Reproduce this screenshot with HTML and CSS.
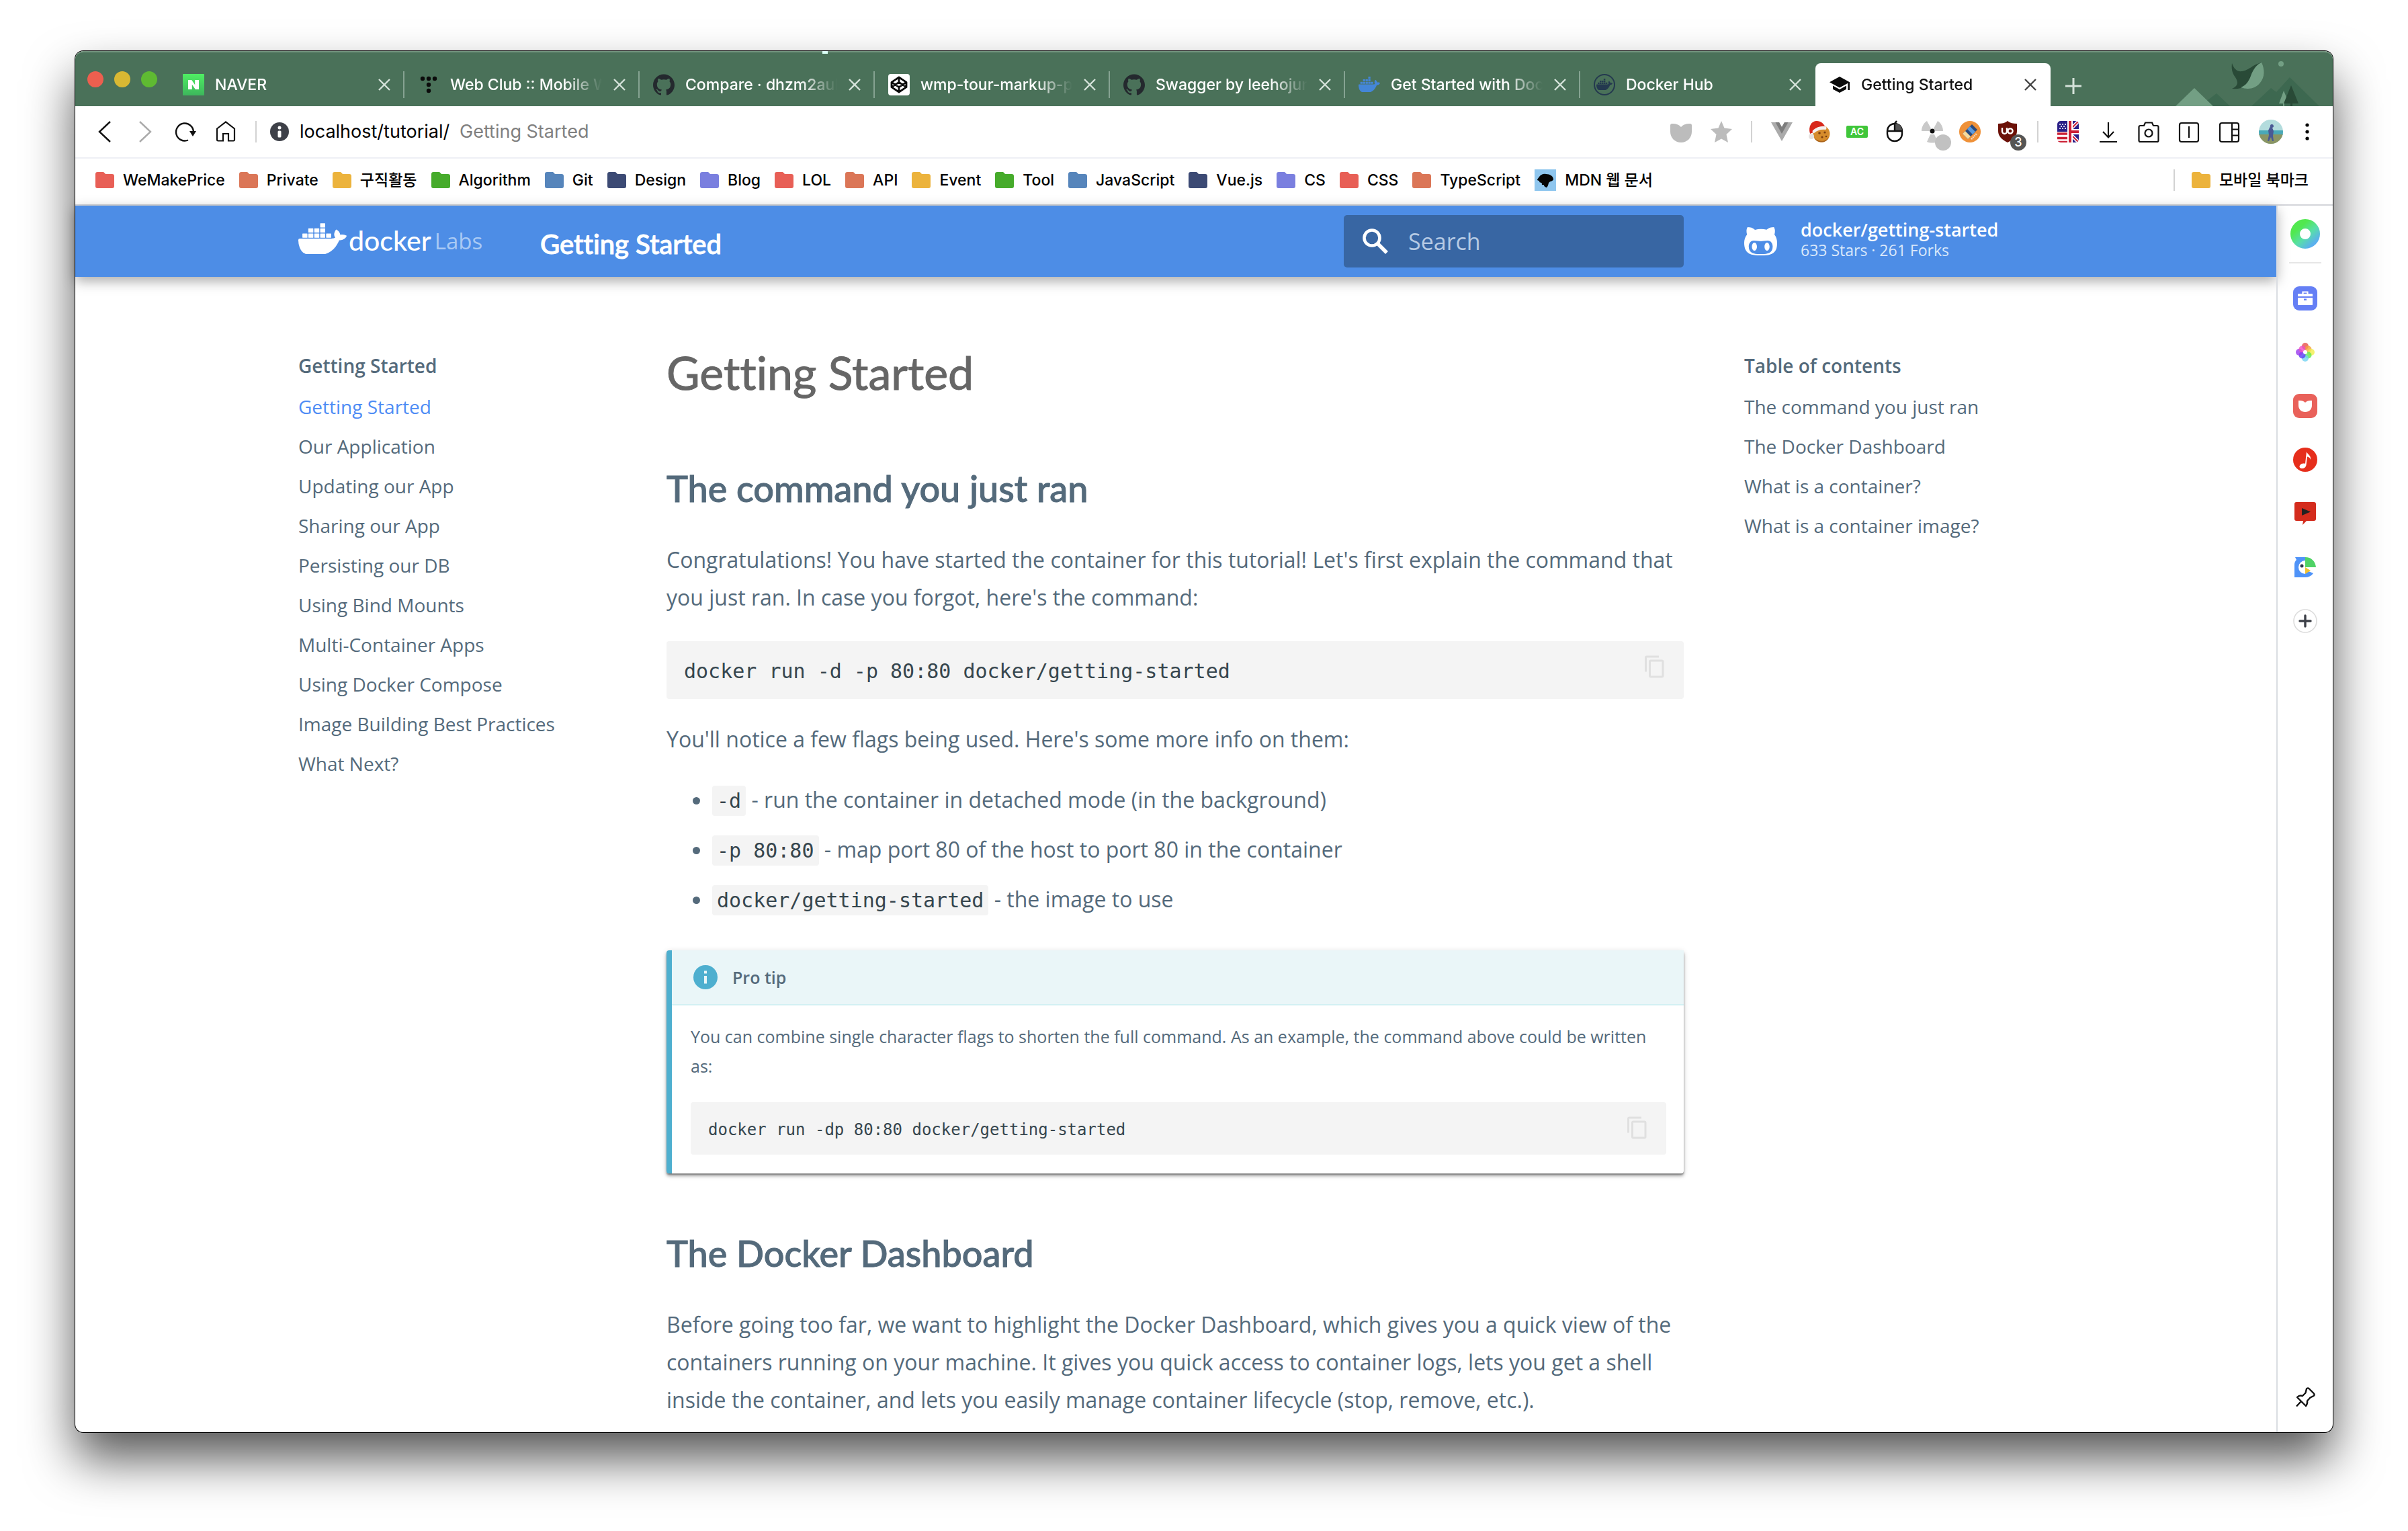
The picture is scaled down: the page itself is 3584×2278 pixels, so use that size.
FILE: index.html
```html
<!DOCTYPE html>
<html lang="ko">
<head>
<meta charset="utf-8">
<meta name="viewport" content="width=device-width, initial-scale=1">
<title>Getting Started</title>
<link rel="stylesheet" href="styles.css">
</head>
<body>

<svg class="sprite" aria-hidden="true">
  <symbol id="close" viewBox="0 0 20 20"><path d="M2 2l16 16M18 2L2 18" fill="none" stroke="currentColor" stroke-width="2.4"/></symbol>
  <symbol id="folder" viewBox="0 0 28 24"><path d="M0 3a3 3 0 0 1 3-3h8c1.500 0 2 .6 2.800 1.600L15 3h10a3 3 0 0 1 3 3v15a3 3 0 0 1-3 3H3a3 3 0 0 1-3-3z" fill="currentColor"/></symbol>
  <symbol id="whale" viewBox="0 3.300 24 16.500" preserveAspectRatio="none"><path fill="currentColor" d="M13.983 11.078h2.119a.186.186 0 00.186-.185V9.006a.186.186 0 00-.186-.186h-2.119a.185.185 0 00-.185.185v1.888c0 .102.083.185.185.185m-2.954-5.430h2.118a.186.186 0 00.186-.186V3.574a.186.186 0 00-.186-.185h-2.118a.185.185 0 00-.185.185v1.888c0 .102.082.185.185.185m0 2.716h2.118a.187.187 0 00.186-.186V6.290a.186.186 0 00-.186-.185h-2.118a.185.185 0 00-.185.185v1.887c0 .102.082.185.185.186m-2.930 0h2.120a.186.186 0 00.184-.186V6.290a.185.185 0 00-.185-.185H8.100a.185.185 0 00-.185.185v1.887c0 .102.083.185.185.186m-2.964 0h2.119a.186.186 0 00.185-.186V6.290a.185.185 0 00-.185-.185H5.136a.186.186 0 00-.186.185v1.887c0 .102.084.185.186.186m5.893 2.715h2.118a.186.186 0 00.186-.185V9.006a.186.186 0 00-.186-.186h-2.118a.185.185 0 00-.185.185v1.888c0 .102.082.185.185.185m-2.930 0h2.120a.185.185 0 00.184-.185V9.006a.185.185 0 00-.184-.186h-2.120a.185.185 0 00-.184.185v1.888c0 .102.083.185.185.185m-2.964 0h2.119a.185.185 0 00.185-.185V9.006a.185.185 0 00-.184-.186h-2.120a.186.186 0 00-.186.186v1.887c0 .102.084.185.186.185m-2.920 0h2.120a.185.185 0 00.184-.185V9.006a.185.185 0 00-.184-.186h-2.120a.185.185 0 00-.184.185v1.888c0 .102.082.185.185.185M23.763 9.890c-.065-.051-.672-.51-1.954-.51-.338.001-.676.03-1.010.087-.248-1.700-1.653-2.530-1.716-2.566l-.344-.199-.226.327c-.284.438-.49.922-.612 1.430-.23.970-.09 1.882.403 2.661-.595.332-1.550.413-1.744.42H.751a.751.751 0 00-.75.748 11.376 11.376 0 00.692 4.062c.545 1.428 1.355 2.480 2.410 3.124 1.180.723 3.100 1.137 5.275 1.137.983.003 1.963-.086 2.930-.266a12.248 12.248 0 003.823-1.389c.98-.567 1.860-1.288 2.610-2.136 1.252-1.418 1.998-2.997 2.553-4.400h.221c1.372 0 2.215-.549 2.680-1.009.309-.293.55-.65.707-1.046l.098-.288z"/></symbol>
  <symbol id="github" viewBox="0 0 24 24"><path fill="#24292e" d="M12 .297c-6.630 0-12 5.373-12 12 0 5.303 3.438 9.800 8.205 11.385.6.113.82-.258.82-.577 0-.285-.01-1.040-.015-2.040-3.338.724-4.042-1.610-4.042-1.610C4.422 18.070 3.633 17.700 3.633 17.700c-1.087-.744.084-.729.084-.729 1.205.084 1.838 1.236 1.838 1.236 1.070 1.835 2.809 1.305 3.495.998.108-.776.417-1.305.76-1.605-2.665-.3-5.466-1.332-5.466-5.930 0-1.310.465-2.380 1.235-3.220-.135-.303-.54-1.523.105-3.176 0 0 1.005-.322 3.300 1.230.96-.267 1.980-.399 3-.405 1.020.006 2.040.138 3 .405 2.280-1.552 3.285-1.230 3.285-1.230.645 1.653.24 2.873.12 3.176.765.84 1.230 1.910 1.230 3.220 0 4.610-2.805 5.625-5.475 5.920.42.36.81 1.096.81 2.220 0 1.606-.015 2.896-.015 3.286 0 .315.21.69.825.57C20.565 22.092 24 17.592 24 12.297c0-6.627-5.373-12-12-12"/></symbol>
  <symbol id="copy" viewBox="0 0 24 24"><path fill="currentColor" d="M19 21H8V7h11m0-2H8a2 2 0 00-2 2v14a2 2 0 002 2h11a2 2 0 002-2V7a2 2 0 00-2-2m-3-4H4a2 2 0 00-2 2v14h2V3h12V1z"/></symbol>
  <symbol id="shield" viewBox="0 0 32 32"><path fill="currentColor" d="M0 6.500C0 4.500 1.500 4 3.500 4 9 4 13 5.500 16 9c3-3.500 7-5 12.500-5C30.500 4 32 4.500 32 6.500V16c0 9-7 16-16 16S0 25 0 16z"/></symbol>
</svg>

<div class="window">
  <div class="tabstrip">
    <div class="lights">
      <button class="light light-close" aria-label="Close window"></button>
      <button class="light light-min" aria-label="Minimize"></button>
      <button class="light light-max" aria-label="Zoom"></button>
    </div>
    <div class="tabs">
      <div class="tab">
        <svg class="favicon" viewBox="0 0 32 32"><defs><linearGradient id="nv" x2="0" y2="1"><stop stop-color="#4fee63"/><stop offset="1" stop-color="#3db65c"/></linearGradient></defs><rect width="32" height="32" rx="1" fill="url(#nv)"/><path d="M8 9h5.200l5 7.200V9H24v14h-5.200l-5-7.200V23H8z" fill="#fff"/></svg>
        <a class="tab-title" href="#">NAVER</a>
        <button class="tab-close" aria-label="Close tab"><svg><use href="#close"/></svg></button>
      </div>
      <div class="tab">
        <svg class="favicon" viewBox="0 0 32 32"><g fill="#0b0b0b"><circle cx="7" cy="7" r="3.200"/><circle cx="16" cy="7" r="3.200"/><circle cx="25" cy="7" r="3.200"/><circle cx="16" cy="16" r="3.200"/><circle cx="16" cy="25" r="3.200"/></g></svg>
        <a class="tab-title" href="#">Web Club :: Mobile Web</a>
        <button class="tab-close" aria-label="Close tab"><svg><use href="#close"/></svg></button>
      </div>
      <div class="tab">
        <svg class="favicon"><use href="#github"/></svg>
        <a class="tab-title" href="#">Compare · dhzm2aul/</a>
        <button class="tab-close" aria-label="Close tab"><svg><use href="#close"/></svg></button>
      </div>
      <div class="tab">
        <svg class="favicon" viewBox="0 0 32 32"><rect width="32" height="32" rx="4" fill="#fff"/><path d="M16 5l11 7.300v7.400L16 27 5 19.700v-7.400zM16 5v7.300M16 27v-7.300M5 12.300l11 7.400 11-7.400M5 19.700l11-7.400 11 7.400" fill="none" stroke="#0a0a0a" stroke-width="2.800" stroke-linejoin="round"/></svg>
        <a class="tab-title" href="#">wmp-tour-markup-poc</a>
        <button class="tab-close" aria-label="Close tab"><svg><use href="#close"/></svg></button>
      </div>
      <div class="tab">
        <svg class="favicon"><use href="#github"/></svg>
        <a class="tab-title" href="#">Swagger by leehojung</a>
        <button class="tab-close" aria-label="Close tab"><svg><use href="#close"/></svg></button>
      </div>
      <div class="tab">
        <svg class="favicon docker-blue" viewBox="0 0 32 32"><use href="#whale" y="4" width="32" height="23"/></svg>
        <a class="tab-title" href="#">Get Started with Docker</a>
        <button class="tab-close" aria-label="Close tab"><svg><use href="#close"/></svg></button>
      </div>
      <div class="tab tab-last">
        <svg class="favicon docker-navy" viewBox="0 0 32 32"><circle cx="16" cy="16" r="15" fill="none" stroke="currentColor" stroke-width="2"/><use href="#whale" x="4" y="7" width="24" height="17"/></svg>
        <a class="tab-title" href="#">Docker Hub</a>
        <button class="tab-close" aria-label="Close tab"><svg><use href="#close"/></svg></button>
      </div>
      <div class="tab tab-active">
        <svg class="favicon" viewBox="0 0 32 32"><path d="M16 4l15 8.200V24h-2.700V13.700L16 20.400 1 12.200zM6 17.500l10 5.500 10-5.500v5.200L16 28 6 22.700z" fill="#0a0a0a"/></svg>
        <a class="tab-title" href="#">Getting Started</a>
        <button class="tab-close" aria-label="Close tab"><svg><use href="#close"/></svg></button>
      </div>
    </div>
    <button class="new-tab" aria-label="New tab"><svg viewBox="0 0 24 24"><path d="M12 0v24M0 12h24" stroke="#d5e2da" stroke-width="3"/></svg></button>
    <svg class="scenery" viewBox="0 0 234 80" aria-hidden="true">
      <path d="M36 80l25-19 20 19z" fill="#3d6850"/>
      <path d="M0 80l28-27 28 27z" fill="#739f84"/>
      <path d="M113 80l29-27 8 6 20-22 44 43z" fill="#3d6850"/>
      <path d="M154 76l7-19 8 19zM160 76h2v4h-2z" fill="#739f84"/>
      <path d="M161 76l11-27 11 27zM171 76h3v4h-3z" fill="#294a37"/>
      <path d="M84 16c3 9 8 13 15 12 10-1 14-9 29-13-8 8-10 16-14 25-5 10-15 15-30 14 9-4 10-9 5-17-5-7-6-13-5-21z" fill="#294a37"/>
      <path d="M128 15c5 10 5 22-2 30-7 9-18 11-29 7 8-3 12-9 15-17 4-11 9-17 16-20z" fill="#739f84"/>
      <circle cx="157" cy="17" r="4" fill="#739f84"/>
    </svg>
  </div>

  <div class="toolbar">
    <div class="tools">
      <button class="tool" aria-label="Back"><svg viewBox="0 0 32 32"><path d="M24 1L8 16l16 15" fill="none" stroke="#111" stroke-width="2.400"/></svg></button>
      <button class="tool" aria-label="Forward" disabled><svg viewBox="0 0 32 32"><path d="M8 1l16 15L8 31" fill="none" stroke="#aaa" stroke-width="2.400"/></svg></button>
      <button class="tool" aria-label="Reload"><svg viewBox="0 0 32 32"><path d="M20 28.500A13 13 0 1 1 28 17" fill="none" stroke="#111" stroke-width="2.400"/><path d="M22 15h10l-5 8z" fill="#111"/></svg></button>
      <button class="tool" aria-label="Home"><svg viewBox="0 0 32 32"><path d="M3 11.500L16 1.500l13 10V28a1.500 1.500 0 0 1-1.500 1.500H20V19h-8v10.500H4.500A1.500 1.500 0 0 1 3 28z" fill="none" stroke="#111" stroke-width="2.200"/></svg></button>
    </div>
    <span class="rule"></span>
    <div class="address">
      <svg class="info" viewBox="0 0 28 28"><circle cx="14" cy="14" r="14" fill="#3d4048"/><circle cx="14" cy="8" r="2.500" fill="#fff"/><rect x="11.500" y="12.500" width="5" height="10" rx="1.500" fill="#fff"/></svg>
      <input class="url" type="text" aria-label="Address" value="localhost/tutorial/">
      <span class="url-title">Getting Started</span>
    </div>
    <div class="tools">
      <button class="tool muted" aria-label="Tracking protection"><svg><use href="#shield"/></svg></button>
      <button class="tool muted" aria-label="Bookmark"><svg viewBox="0 0 32 32"><path d="M16 0l4.500 10.500L32 12l-8.500 8L26 32l-10-5.500L6 32l2.500-12L0 12l11.500-1.500z" fill="currentColor"/></svg></button>
    </div>
    <span class="rule"></span>
    <div class="tools extensions">
      <button class="tool" aria-label="Vue devtools"><svg viewBox="0 0 32 32"><path d="M0 2h12l4 7 4-7h12L16 30z" fill="#ababab"/><path d="M6.500 2H12l4 7 4-7h5.500L16 19z" fill="#7d7d7d"/></svg></button>
      <button class="tool" aria-label="Cookies"><svg viewBox="0 0 32 32"><circle cx="19" cy="19" r="12.500" fill="#d68c2c"/><path d="M8 25c6 6 17 7 22-1-2 6-7 8-12 7.500-5-.5-8-3-10-6.500z" fill="#a9621a"/><g fill="#7b3f10"><circle cx="16" cy="18" r="1.800"/><circle cx="24" cy="17" r="1.600"/><circle cx="20" cy="24" r="1.600"/><circle cx="26" cy="23" r="1.300"/></g><path d="M2 19C-1 8 4 0 12 0c6 0 11 4 13 10L7 17z" fill="#d8281b"/><path d="M6 14c6-5 12-7 19-6 2 1 2 4 0 5-7-1-12 1-17 5-2 0-3-2-2-4z" fill="#f5f1ee"/><circle cx="4" cy="23" r="4" fill="#e6e2df"/></svg></button>
      <button class="tool" aria-label="AC"><svg viewBox="0 0 32 32"><rect y="7" width="32" height="18" rx="2" fill="#3fc63a"/><text x="16" y="21" text-anchor="middle" class="ac-text">AC</text></svg></button>
      <button class="tool" aria-label="Mouse gestures"><svg viewBox="0 0 32 32"><rect x="5" y="4" width="22" height="26" rx="11" fill="#fff" stroke="#111" stroke-width="2.400"/><path d="M17 4c6 0 10 4 10 11H17z" fill="#555"/><path d="M5 15h22M16 15V4l3-4" fill="none" stroke="#111" stroke-width="2.400"/></svg></button>
      <button class="tool" aria-label="Blocker"><svg viewBox="0 0 32 32"><path d="M0 15C0 9 3 3 8 0l6 11-2 4zM32 15c0-6-3-12-8-15l-6 11 2 4zM8 31l5-11h6l5 11c-5 2-11 2-16 0z" fill="#c9c9c9"/><circle cx="16" cy="15" r="3.500" fill="#111"/><circle cx="32" cy="32" r="12" fill="#c1c1c1"/></svg></button>
      <button class="tool" aria-label="Eraser"><svg viewBox="0 0 32 32"><circle cx="16" cy="16" r="16" fill="#ef9138"/><path d="M5 19L19 5l8 8-14 14z" fill="#2b4a7c"/><path d="M12 12l4-4 8 8-4 4z" fill="#5a9ae0"/><path d="M5 19l4-4 8 8-4 4z" fill="#f7d99a"/><path d="M18 27l8-8" stroke="#f9d6b5" stroke-width="2.500" stroke-dasharray="2 1"/></svg></button>
      <button class="tool" aria-label="uBlock"><svg viewBox="0 0 32 32"><path d="M16 0c4 3 8 4 14 4v11c0 8-6 13-14 17C8 28 2 23 2 15V4c6 0 10-1 14-4z" fill="#6b1108"/><path d="M8 10v5.500a3.500 3.500 0 0 0 7 0V10" fill="none" stroke="#fff" stroke-width="2.400"/><circle cx="20" cy="15" r="3.600" fill="none" stroke="#fff" stroke-width="2.400"/></svg><span class="badge">3</span></button>
    </div>
    <span class="rule"></span>
    <div class="tools">
      <button class="tool" aria-label="Translate"><svg viewBox="0 0 32 32"><clipPath id="fl"><rect width="32" height="32" rx="5"/></clipPath><g clip-path="url(#fl)"><rect width="32" height="32" fill="#fff"/><path d="M0 19h16M0 25.500h16M0 31.500h16" stroke="#cc1f35" stroke-width="3.600"/><rect width="16" height="16" fill="#2a1f87"/><path d="M4 5h.1M8 5h.1M12 5h.1M6 8h.1M10 8h.1M4 11h.1M8 11h.1M12 11h.1" stroke="#fff" stroke-width="2" stroke-linecap="round"/><rect x="18" width="14" height="32" fill="#2a1f87"/><path d="M18 14L32 0M18 18l14 14" stroke="#fff" stroke-width="5"/><path d="M18 14L32 0M18 18l14 14" stroke="#cc1f35" stroke-width="2"/><path d="M18 16h14M19 0v32" stroke="#fff" stroke-width="8"/><path d="M18 16h14M19 0v32" stroke="#cc1f35" stroke-width="4"/></g></svg></button>
      <button class="tool" aria-label="Downloads"><svg viewBox="0 0 32 32"><path d="M16 2v22M8 16l8 8.500 8-8.500M3 31h26" fill="none" stroke="#111" stroke-width="2.200"/></svg></button>
      <button class="tool" aria-label="Capture"><svg viewBox="0 0 32 32"><path d="M1.500 9a2 2 0 0 1 2-2H9l2-4.500h10L23 7h5.500a2 2 0 0 1 2 2v20a2 2 0 0 1-2 2h-25a2 2 0 0 1-2-2z" fill="none" stroke="#111" stroke-width="2.200"/><circle cx="16" cy="18" r="5.500" fill="none" stroke="#111" stroke-width="2.200"/></svg></button>
      <button class="tool" aria-label="Split view"><svg viewBox="0 0 32 32"><rect x="2" y="3" width="28" height="28" rx="3" fill="none" stroke="#111" stroke-width="2.200"/><path d="M16 8v17" stroke="#111" stroke-width="2.200"/></svg></button>
      <button class="tool" aria-label="Side panel"><svg viewBox="0 0 32 32"><rect x="2" y="3" width="28" height="28" rx="3" fill="none" stroke="#111" stroke-width="2.200"/><path d="M20 3v28M20 12.500h10M20 21.500h10" stroke="#111" stroke-width="2.200"/></svg></button>
      <button class="tool avatar" aria-label="Profile"><svg viewBox="0 0 36 36"><clipPath id="av"><circle cx="18" cy="18" r="18"/></clipPath><g clip-path="url(#av)"><rect width="36" height="36" fill="#b3dcdd"/><rect y="16" width="36" height="7" fill="#4aa9b8"/><rect y="22" width="36" height="14" fill="#8a9564"/><path d="M17 10a2.500 2.500 0 1 1 3 2l2 5-1 7 1 8h-2l-2-6-3 6h-2l2-9-1-7z" fill="#4a5a94"/></g></svg></button>
      <button class="tool menu" aria-label="Menu"><svg viewBox="0 0 16 32"><circle cx="8" cy="6" r="2.600"/><circle cx="8" cy="16" r="2.600"/><circle cx="8" cy="26" r="2.600"/></svg></button>
    </div>
  </div>

  <nav class="bookmarks" aria-label="Bookmarks">
    <a href="#"><svg class="folder red"><use href="#folder"/></svg>WeMakePrice</a>
    <a href="#"><svg class="folder orange"><use href="#folder"/></svg>Private</a>
    <a href="#"><svg class="folder yellow"><use href="#folder"/></svg>구직활동</a>
    <a href="#"><svg class="folder green"><use href="#folder"/></svg>Algorithm</a>
    <a href="#"><svg class="folder blue"><use href="#folder"/></svg>Git</a>
    <a href="#"><svg class="folder navy"><use href="#folder"/></svg>Design</a>
    <a href="#"><svg class="folder violet"><use href="#folder"/></svg>Blog</a>
    <a href="#"><svg class="folder red"><use href="#folder"/></svg>LOL</a>
    <a href="#"><svg class="folder orange"><use href="#folder"/></svg>API</a>
    <a href="#"><svg class="folder yellow"><use href="#folder"/></svg>Event</a>
    <a href="#"><svg class="folder green"><use href="#folder"/></svg>Tool</a>
    <a href="#"><svg class="folder blue"><use href="#folder"/></svg>JavaScript</a>
    <a href="#"><svg class="folder navy"><use href="#folder"/></svg>Vue.js</a>
    <a href="#"><svg class="folder violet"><use href="#folder"/></svg>CS</a>
    <a href="#"><svg class="folder red"><use href="#folder"/></svg>CSS</a>
    <a href="#"><svg class="folder orange"><use href="#folder"/></svg>TypeScript</a>
    <a href="#"><svg class="mdn" viewBox="0 0 32 32"><rect width="32" height="32" fill="#8fc6ee"/><path d="M4 15c1-1 2-3 3-4 2-3 6-5 10-4 6 0 11 3 11 8-1 3-4 2-6 4-2 2-1 5-4 8-2-1-4-1-4-4-3 1-4-1-3-3-2 0-4 0-4-3-2 0-3-1-3-2z" fill="#050505"/></svg>MDN 웹 문서</a>
    <span class="rule bookmarks-rule"></span>
    <a href="#"><svg class="folder yellow"><use href="#folder"/></svg>모바일 북마크</a>
  </nav>

  <div class="body">
    <div class="page">
      <header class="site-header">
        <div class="container header-row">
          <div class="brand">
            <a class="logo" href="#" aria-label="docker Labs"><svg class="logo-whale"><use href="#whale"/></svg><span class="logo-docker">docker</span><span class="logo-labs">Labs</span></a>
            <span class="site-title">Getting Started</span>
          </div>
          <form class="search">
            <svg class="search-icon" viewBox="0 0 38 38"><circle cx="14" cy="14" r="11.500" fill="none" stroke="#fff" stroke-width="4.600"/><path d="M22 22l14 14" stroke="#fff" stroke-width="5.500"/></svg>
            <input type="text" aria-label="Search" placeholder="Search">
          </form>
          <a class="repo" href="#">
            <svg class="repo-icon" viewBox="0 64 480 384" preserveAspectRatio="none"><path fill="#fff" d="M186.100 328.700c0 20.900-10.900 55.100-36.700 55.100s-36.700-34.200-36.700-55.100 10.900-55.100 36.700-55.100 36.700 34.200 36.700 55.100zM480 278.200c0 31.900-3.200 65.700-17.500 95-37.900 76.600-142.100 74.800-216.700 74.800-75.800 0-186.200 2.700-225.600-74.800-14.600-29-20.200-63.100-20.200-95 0-41.900 13.900-81.500 41.500-113.600-5.200-15.800-7.700-32.400-7.700-48.800 0-21.500 4.900-32.300 14.600-51.800 45.300 0 74.300 9 108.800 36 29-6.900 58.800-10 88.700-10 27 0 54.200 2.900 80.400 9.200 34-26.700 63-35.200 107.800-35.200 9.800 19.500 14.600 30.300 14.600 51.800 0 16.400-2.600 32.700-7.700 48.200 27.500 32.400 39 72.300 39 114.200zm-64.300 50.500c0-43.900-26.700-82.600-73.500-82.600-18.900 0-37 3.400-56 6-14.900 2.300-29.800 3.200-45.100 3.200-15.200 0-30.100-.9-45.100-3.200-18.700-2.600-37-6-56-6-46.800 0-73.500 38.700-73.500 82.600 0 87.800 80.400 101.300 150.400 101.300h48.200c70.300 0 150.600-13.400 150.600-101.300zm-82.600-55.100c-25.800 0-36.700 34.200-36.700 55.100s10.900 55.100 36.700 55.100 36.700-34.200 36.700-55.100-10.900-55.100-36.700-55.100z"/></svg>
            <span class="repo-text"><span class="repo-name">docker/getting-started</span><span class="repo-facts">633 Stars · 261 Forks</span></span>
          </a>
        </div>
      </header>

      <div class="container columns">
        <nav class="sidebar" aria-labelledby="nav-title">
          <h2 id="nav-title">Getting Started</h2>
          <ul>
            <li><a class="current" href="#">Getting Started</a></li>
            <li><a href="#">Our Application</a></li>
            <li><a href="#">Updating our App</a></li>
            <li><a href="#">Sharing our App</a></li>
            <li><a href="#">Persisting our DB</a></li>
            <li><a href="#">Using Bind Mounts</a></li>
            <li><a href="#">Multi-Container Apps</a></li>
            <li><a href="#">Using Docker Compose</a></li>
            <li><a href="#">Image Building Best Practices</a></li>
            <li><a href="#">What Next?</a></li>
          </ul>
        </nav>

        <main class="article">
          <h1>Getting Started</h1>
          <h2 id="command">The command you just ran</h2>
          <p>Congratulations! You have started the container for this tutorial! Let's first explain the command that you just ran. In case you forgot, here's the command:</p>
          <div class="code-block"><code>docker run -d -p 80:80 docker/getting-started</code><button aria-label="Copy to clipboard"><svg><use href="#copy"/></svg></button></div>
          <p>You'll notice a few flags being used. Here's some more info on them:</p>
          <ul class="flags">
            <li><code>-d</code> - run the container in detached mode (in the background)</li>
            <li><code>-p 80:80</code> - map port 80 of the host to port 80 in the container</li>
            <li><code>docker/getting-started</code> - the image to use</li>
          </ul>
          <aside class="tip">
            <div class="tip-title"><svg viewBox="0 0 36 36"><circle cx="18" cy="18" r="18" fill="#4eafcf"/><path d="M16 8.500h4v4h-4zM16 16h4v11.500h-4z" fill="#eaf6f8"/></svg>Pro tip</div>
            <div class="tip-body">
              <p>You can combine single character flags to shorten the full command. As an example, the command above could be written as:</p>
              <div class="code-block small"><code>docker run -dp 80:80 docker/getting-started</code><button aria-label="Copy to clipboard"><svg><use href="#copy"/></svg></button></div>
            </div>
          </aside>
          <h2 id="dashboard">The Docker Dashboard</h2>
          <p>Before going too far, we want to highlight the Docker Dashboard, which gives you a quick view of the containers running on your machine. It gives you quick access to container logs, lets you get a shell inside the container, and lets you easily manage container lifecycle (stop, remove, etc.).</p>
        </main>

        <nav class="toc" aria-labelledby="toc-title">
          <h2 id="toc-title">Table of contents</h2>
          <ul>
            <li><a href="#command">The command you just ran</a></li>
            <li><a href="#dashboard">The Docker Dashboard</a></li>
            <li><a href="#">What is a container?</a></li>
            <li><a href="#">What is a container image?</a></li>
          </ul>
        </nav>
      </div>
    </div>

    <aside class="rail" aria-label="Sidebar apps">
      <button class="rail-main" aria-label="Whale"><svg viewBox="0 0 44 44"><defs><linearGradient id="dn" x1=".2" y1=".2" x2=".9" y2="1"><stop stop-color="#51e84f"/><stop offset=".5" stop-color="#58dfa8"/><stop offset="1" stop-color="#5bb0ee"/></linearGradient></defs><circle cx="22" cy="22" r="15" fill="none" stroke="url(#dn)" stroke-width="14"/></svg></button>
      <span class="rail-rule"></span>
      <div class="rail-apps">
        <button aria-label="Tools"><svg viewBox="0 0 36 36"><rect width="36" height="36" rx="9" fill="#657ff5"/><path d="M14.500 12V8.500h7V12" fill="none" stroke="#fff" stroke-width="2.200"/><path d="M8 11h20a1 1 0 0 1 1 1v3H7v-3a1 1 0 0 1 1-1zM7 17h22v10a1 1 0 0 1-1 1H8a1 1 0 0 1-1-1z" fill="#fff"/><path d="M16 18.500h4v2.500h-4z" fill="#657ff5"/></svg></button>
        <button aria-label="Photos"><svg viewBox="0 0 36 36"><g fill-opacity=".8"><circle cx="18" cy="9" r="5" fill="#e8504a"/><circle cx="22.500" cy="13.500" r="5" fill="#f2a23c"/><circle cx="27" cy="18" r="5" fill="#f3ee4c"/><circle cx="22.500" cy="22.500" r="5" fill="#63e84c"/><circle cx="18" cy="27" r="5" fill="#72d3f2"/><circle cx="13.500" cy="22.500" r="5" fill="#5a3ff0"/><circle cx="9" cy="18" r="5" fill="#9a38ee"/><circle cx="13.500" cy="13.500" r="5" fill="#ee4fc4"/></g><circle cx="18" cy="18" r="3" fill="#fff"/></svg></button>
        <button aria-label="Guard"><svg viewBox="0 0 36 36"><rect width="36" height="36" rx="9" fill="#e9615a"/><path d="M8 10c4-.5 8 .5 10 3 2-2.500 6-3.500 10-3v7c0 6-4 10-10 10S8 23 8 17z" fill="#fff"/></svg></button>
        <button aria-label="Music"><svg viewBox="0 0 36 36"><circle cx="18" cy="18" r="18" fill="#e62e1b"/><path d="M20 6c1 4 7 5 6 12-1-3-3-4-5-4.500L19.500 26c-.5 3-3 5-6 5s-5-2-3.500-4.500S15 23 18 24z" fill="#fff"/></svg></button>
        <button aria-label="Video"><svg viewBox="0 0 36 36"><path d="M5 1h26a3 3 0 0 1 3 3v22a3 3 0 0 1-3 3H20l-6 6 1-6H5a3 3 0 0 1-3-3V4a3 3 0 0 1 3-3z" fill="#d42c1d"/><path d="M13 10l13 5.500L13 21z" fill="#222"/></svg></button>
        <button aria-label="Papago"><svg viewBox="0 0 36 36"><path d="M3 3h15v30H2V14c0-3 1-5 3-7z" fill="#4f93f8"/><path d="M18 3c9 0 15 6 16 15H18z" fill="#4fd266"/><path d="M18 33c5 0 9-2 12-6l-7-3-5 2z" fill="#4f93f8"/><path d="M18 18l8 5-8 5z" fill="#f2c230"/><path d="M18 8a10 10 0 0 0 0 20z" fill="#fff"/><circle cx="13" cy="16" r="2.500" fill="#2d3550"/></svg></button>
        <button aria-label="Add"><svg viewBox="0 0 36 36"><circle cx="18" cy="18" r="17" fill="#fff" stroke="#dcdcdc" stroke-width="1.600"/><path d="M18 10v16M10 18h16" stroke="#3d4048" stroke-width="3.400" stroke-linecap="round"/></svg></button>
      </div>
      <button class="pin" aria-label="Pin"><svg viewBox="0 0 32 32"><path d="M18 3.500c1-1.500 2.500-1.500 4 0l6.500 6.500c1.500 1.500 1.500 3 0 4l-5 2.500-4.500 5c.5 3 0 5-2 7.500L4 16c2-2 5-3 8-2l4.500-4.500zM10 22l-7 7.500" fill="none" stroke="#111" stroke-width="2.400" stroke-linejoin="round"/></svg></button>
    </aside>
  </div>
</div>
</body>
</html>
```
FILE: styles.css
```css
* { box-sizing: border-box; }

:root {
  --ui: Inter, "Noto Sans CJK KR", sans-serif;
  --text: "Open Sans", "Noto Sans CJK KR", sans-serif;
  --display: Lato, "Open Sans", sans-serif;
  --mono: "DejaVu Sans Mono", "Liberation Mono", monospace;
  --slate: #546a7b;
}

body {
  margin: 0;
  min-height: 100vh;
  padding: 76px 112px 148px;
  display: flex;
  background: #fff;
  font-family: var(--text);
}

h1, h2, p, ul { margin: 0; padding: 0; }
a { color: inherit; text-decoration: none; }
svg { display: block; }
button {
  margin: 0;
  padding: 0;
  border: 0;
  background: none;
  color: inherit;
  font: inherit;
}
input { border: 0; padding: 0; background: none; outline: 0; }
.sprite { position: absolute; width: 0; height: 0; }

.window {
  flex: 1;
  min-width: 0;
  display: flex;
  flex-direction: column;
  border-radius: 12px;
  background: #fff;
  box-shadow: 0 0 0 1px #000, 0 40px 72px rgba(0, 0, 0, .66);
}

/* Tab strip */
.tabstrip {
  position: relative;
  display: flex;
  align-items: flex-end;
  height: 82px;
  padding-left: 18px;
  border-top: 2px solid #6f917b;
  border-radius: 12px 12px 0 0;
  background: #4a7159;
  font: 500 23px/32px var(--ui);
}
.tabstrip::before {
  content: "";
  position: absolute;
  top: -2px;
  left: 1112px;
  width: 8px;
  height: 4px;
  background: #d9fff5;
}
.lights { display: flex; gap: 16px; padding-bottom: 28px; }
.light { width: 24px; height: 24px; border-radius: 50%; }
.light-close { background: #ec5f4f; }
.light-min { background: #d9b833; }
.light-max { background: #5fba32; }
.tabs { display: flex; flex: 0 1 2800px; min-width: 0; margin-left: 18px; }
.tab {
  flex: 1 1 0;
  min-width: 0;
  display: flex;
  align-items: center;
  height: 64px;
  padding-left: 20px;
  color: #fff;
}
.tab::after { content: ""; width: 2px; height: 40px; margin-left: auto; background: #86a392; }
.tab-last::after, .tab-active::after { background: none; }
.tab-active { background: #fff; color: #111; border-radius: 8px 8px 0 0; }
.favicon { flex: none; width: 32px; height: 32px; }
.docker-blue { color: #4486d8; }
.docker-navy { color: #24394f; }
.tab-title {
  flex: 1;
  min-width: 0;
  margin: 0 12px 0 16px;
  overflow: hidden;
  white-space: nowrap;
  -webkit-mask-image: linear-gradient(to right, #000 calc(100% - 60px), transparent calc(100% - 4px));
  mask-image: linear-gradient(to right, #000 calc(100% - 60px), transparent calc(100% - 4px));
}
.tab-close { margin-right: 18px; color: #d5e2da; }
.tab-close svg { width: 20px; height: 20px; }
.tab-active .tab-close { color: #444; }
.new-tab { margin: 0 auto 18px 22px; }
.new-tab svg { width: 24px; height: 24px; }
.scenery { width: 234px; height: 80px; }

/* Toolbar */
.toolbar {
  display: flex;
  align-items: center;
  height: 78px;
  padding: 0 30px 0 28px;
  border-bottom: 2px solid #eeeff5;
}
.tools { display: flex; align-items: center; gap: 28px; }
.extensions { gap: 24px; }
.tool { position: relative; width: 32px; height: 32px; }
.tool svg { width: 100%; height: 100%; overflow: visible; }
.muted { color: #bcbcbc; }
.avatar { width: 36px; height: 36px; }
.menu { width: 16px; }
.rule { flex: none; width: 2px; height: 32px; margin: 0 28px; background: #d2d2d2; }
.ac-text { font: 600 14px var(--ui); fill: #fff; }
.badge {
  position: absolute;
  top: 20px;
  left: 20px;
  width: 24px;
  height: 24px;
  border-radius: 50%;
  background: #555;
  color: #fff;
  font: 500 18px/24px var(--ui);
  text-align: center;
}
.address {
  flex: 1;
  min-width: 0;
  display: flex;
  align-items: center;
  margin-left: -8px;
  font: 400 27px/36px var(--ui);
}
.info { width: 28px; height: 28px; margin-right: 16px; }
.url { width: 238px; font: inherit; color: #000; }
.url-title { color: #808080; }

/* Bookmarks bar */
.bookmarks {
  display: flex;
  align-items: center;
  gap: 21px;
  height: 70px;
  padding: 0 36px 4px 30px;
  border-bottom: 2px solid #d3d5da;
  font: 500 23px/32px var(--ui);
  color: #000;
  white-space: nowrap;
}
.bookmarks a { display: flex; align-items: center; gap: 13px; }
.bookmarks-rule { margin: 0 4px 0 auto; }
.folder { width: 28px; height: 24px; }
.mdn { width: 32px; height: 32px; }
.red { color: #e85f56; }
.orange { color: #db7657; }
.yellow { color: #ecb33c; }
.green { color: #46ab2b; }
.blue { color: #5685bb; }
.navy { color: #3c4a74; }
.violet { color: #7a7fdf; }

/* Page */
.body { flex: 1; display: flex; }
.page { flex: 1; min-width: 0; color: var(--slate); }
.container {
  display: grid;
  grid-template-columns: 584px minmax(0, 1fr) 586px;
  max-width: 2684px;
  margin: 0 auto;
}
.site-header {
  background: #4d8de6;
  box-shadow: 0 6px 18px rgba(0, 0, 0, .34);
  color: #fff;
}
.header-row {
  grid-template-columns: minmax(0, 1fr) 506px 586px;
  align-items: center;
  height: 106px;
}
.brand { display: flex; align-items: center; padding-left: 36px; }
.logo { display: flex; align-items: flex-end; width: 360px; padding-bottom: 8px; }
.logo-whale { width: 72px; height: 46px; margin-right: 3px; }
.logo-docker { margin-right: 5px; font: 500 41px/40px var(--display); }
.logo-labs { font: 400 33px/38px var(--text); color: #a8c9f4; }
.site-title {
  padding-top: 8px;
  font: 500 40px/52px var(--display);
  font-variant-ligatures: none;
  -webkit-text-stroke: 1px currentColor;
}
.search {
  display: flex;
  align-items: center;
  gap: 30px;
  height: 78px;
  padding: 0 28px;
  border-radius: 5px;
  background: #3866a3;
}
.search-icon { flex: none; width: 38px; height: 38px; }
.search input { flex: 1; min-width: 0; font: 400 34px/44px var(--text); color: #fff; }
.search input::placeholder { color: #b7cbe4; opacity: 1; }
.repo { display: flex; align-items: center; padding-left: 90px; }
.repo-icon { width: 49px; height: 42px; margin-right: 35px; }
.repo-text { display: flex; flex-direction: column; padding-bottom: 6px; }
.repo-name { font-size: 27px; line-height: 32px; font-weight: 600; }
.repo-facts { font-size: 23px; line-height: 28px; color: #dbe8fa; }

.columns { padding: 98px 0 20px; }
.sidebar, .toc { padding-top: 16px; font-size: 28px; line-height: 36px; }
.sidebar { padding-left: 36px; }
.toc { padding-left: 90px; }
.sidebar h2, .toc h2 { font-size: 28px; font-weight: 600; line-height: 36px; }
.sidebar ul, .toc ul {
  display: flex;
  flex-direction: column;
  gap: 23px;
  margin-top: 25px;
  list-style: none;
}
.current { color: #4e8cf5; }

.article { font-size: 32px; line-height: 56px; }
.article h1, .article h2 {
  font-family: var(--display);
  font-variant-ligatures: none;
  -webkit-text-stroke: 1px currentColor;
}
.article h1 {
  margin-bottom: 91px;
  font-size: 68px;
  font-weight: 400;
  line-height: 88px;
  color: #666;
}
.article h2 {
  margin: 81px 0 40px;
  font-size: 54px;
  font-weight: 500;
  line-height: 76px;
}
.code-block {
  display: flex;
  justify-content: space-between;
  align-items: center;
  height: 86px;
  margin: 37px 0 32px;
  padding: 4px 25px 0 26px;
  border-radius: 4px;
  background: #f4f4f4;
}
code { font-family: var(--mono); font-size: 30px; line-height: 1; color: #36464e; }
.code-block button { align-self: flex-start; margin-top: 16px; color: #e0e0e0; }
.code-block svg { width: 36px; height: 36px; }
.flags {
  display: flex;
  flex-direction: column;
  gap: 18px;
  margin: 34px 0 48px;
  padding-left: 68px;
}
.flags code { padding: 5px 7px; border-radius: 4px; background: #f4f4f4; }
.tip {
  border-left: 8px solid #4eafcf;
  border-radius: 4px;
  box-shadow: 0 4px 4px rgba(0, 0, 0, .25), 0 2px 10px rgba(0, 0, 0, .15), 0 2px 2px rgba(0, 0, 0, .3);
  font-size: 25px;
  line-height: 44px;
}
.tip-title {
  display: flex;
  align-items: center;
  gap: 22px;
  height: 82px;
  padding-left: 32px;
  border-bottom: 2px solid #d2f0f3;
  background: #eaf6f8;
  font-weight: 600;
}
.tip-title svg { width: 36px; height: 36px; }
.tip-body { padding: 24px 26px 28px 28px; }
.small { height: 78px; margin: 32px 0 0; }
.small code { font-size: 24px; }

/* Side rail */
.rail {
  display: flex;
  flex-direction: column;
  align-items: center;
  width: 84px;
  padding: 20px 0 36px;
  border-left: 2px solid #dadde2;
}
.rail-main svg { width: 44px; height: 44px; }
.rail-rule { width: 48px; height: 2px; margin: 20px 0 34px; background: #e6e6e6; }
.rail-apps { display: flex; flex-direction: column; gap: 44px; }
.rail-apps svg { width: 36px; height: 36px; }
.pin { margin-top: auto; }
.pin svg { width: 32px; height: 32px; }
```
